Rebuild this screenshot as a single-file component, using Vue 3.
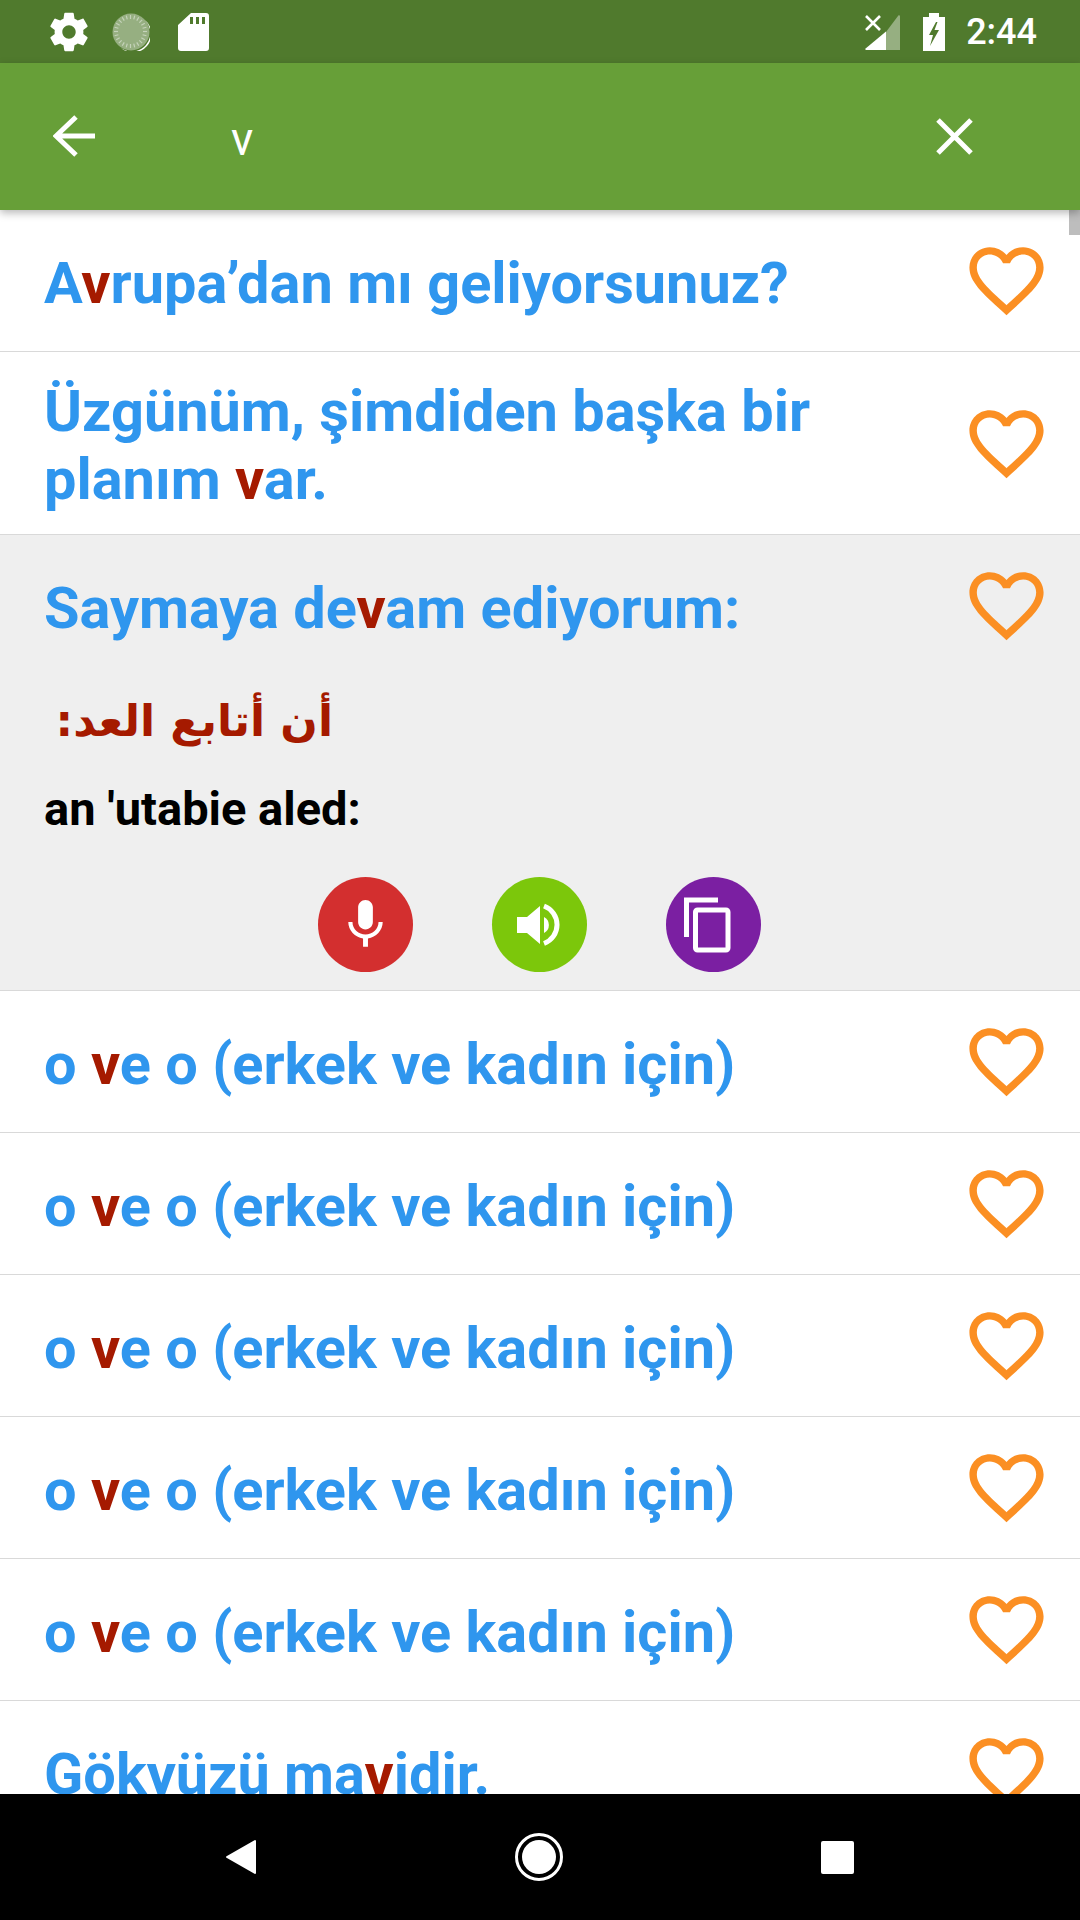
<script setup>
const heart = 'M16.5 3c-1.74 0-3.41.81-4.5 2.09C10.91 3.81 9.24 3 7.5 3 4.42 3 2 5.42 2 8.5c0 3.78 3.4 6.86 8.55 11.54L12 21.35l1.45-1.32C18.6 15.36 22 12.28 22 8.5 22 5.42 19.58 3 16.5 3zm-4.4 15.55l-.1.1-.1-.1C7.14 14.24 4 11.39 4 8.5 4 6.5 5.5 5 7.5 5c1.54 0 3.04.99 3.57 2.36h1.87C13.46 5.99 14.96 5 16.5 5c2 0 3.5 1.5 3.5 3.5 0 2.89-3.14 5.74-7.9 10.05z'

const row = [['o '], ['v', true], ['e o (erkek ve kadın için)']]
const rowsBefore = [
  { parts: [['A'], ['v', true], ['rupa’dan mı geliyorsunuz?']] },
  { parts: [['Üzgünüm, şimdiden başka bir planım '], ['v', true], ['ar.']] },
]
const rowsAfter = [
  { parts: row }, { parts: row }, { parts: row }, { parts: row }, { parts: row },
  { parts: [['Gökyüzü ma'], ['v', true], ['idir.']] },
]
const ticks = Array.from({ length: 24 }, (_, i) => i * 15)
</script>

<template>
  <div class="screen">
    <header class="statusbar">
      <div class="status-left">
        <svg class="gear" viewBox="0 0 24 24"><path fill="#fff" d="M19.43 12.98c.04-.32.07-.64.07-.98s-.03-.66-.07-.98l2.11-1.65c.19-.15.24-.42.12-.64l-2-3.46c-.12-.22-.39-.3-.61-.22l-2.49 1c-.52-.4-1.08-.73-1.69-.98l-.38-2.65C14.46 2.18 14.25 2 14 2h-4c-.25 0-.46.18-.49.42l-.38 2.65c-.61.25-1.17.59-1.69.98l-2.49-1c-.23-.09-.49 0-.61.22l-2 3.46c-.13.22-.07.49.12.64l2.11 1.65c-.04.32-.07.65-.07.98s.03.66.07.98l-2.11 1.65c-.19.15-.24.42-.12.64l2 3.46c.12.22.39.3.61.22l2.49-1c.52.4 1.08.73 1.69.98l.38 2.65c.03.24.24.42.49.42h4c.25 0 .46-.18.49-.42l.38-2.65c.61-.25 1.17-.59 1.69-.98l2.49 1c.23.09.49 0 .61-.22l2-3.46c.12-.22.07-.49-.12-.64l-2.11-1.65zM12 15.5c-1.93 0-3.5-1.57-3.5-3.5s1.57-3.5 3.5-3.5 3.5 1.57 3.5 3.5-1.57 3.5-3.5 3.5z"/></svg>
        <svg class="dial" viewBox="0 0 38 38">
          <circle cx="19" cy="19" r="18.5" fill="#fff" fill-opacity=".4"/>
          <path d="M33 7 A18.5 18.5 0 0 1 9 35 A17 17 0 0 0 33 7z" fill="#fff"/>
          <g stroke="#fff" stroke-opacity=".45" stroke-width="1.2">
            <line v-for="t in ticks" :key="t" x1="18.5" y1="2" x2="18.5" y2="6" :transform="`rotate(${t} 18.5 18.5)`"/>
          </g>
        </svg>
        <svg class="sd" viewBox="0 0 31 38"><path fill="#fff" fill-rule="evenodd" d="M13 0H28a3 3 0 0 1 3 3V35a3 3 0 0 1-3 3H3a3 3 0 0 1-3-3V12zM12 4V11h3V4zM18 4V11h3V4zM24 4V11h3V4z"/></svg>
      </div>
      <div class="status-right">
        <svg class="signal" viewBox="0 0 36 36">
          <path fill="#fff" fill-opacity=".4" d="M21 17 L33 1 a1 1 0 0 1 2 .5 V35 H21z"/>
          <path fill="#fff" d="M0 34 L21 16.5 V35 H1z"/>
          <path stroke="#fff" stroke-width="2.6" fill="none" d="M1 1 L15 15 M15 1 L1 15"/>
        </svg>
        <svg class="battery" viewBox="0 0 22 38"><path fill="#fff" fill-rule="evenodd" d="M6 0H16V4H22V38H0V4H6zM13 9 L6 22 H10 L7 33 L16 17 H11.5 L14.5 9z"/></svg>
        <span class="time">2:44</span>
      </div>
    </header>

    <div class="toolbar">
      <svg class="tb-back" viewBox="0 0 42 42"><path d="M23 2 L3 21 L23 40 M3 21 H42" fill="none" stroke="#fff" stroke-width="5"/></svg>
      <span class="query">v</span>
      <svg class="tb-close" viewBox="0 0 37 37"><path d="M2 2 L35 35 M35 2 L2 35" fill="none" stroke="#fff" stroke-width="5"/></svg>
    </div>

    <main class="list">
      <div class="scrollbar"></div>

      <div v-for="(r, i) in rowsBefore" :key="'b' + i" class="row">
        <div class="phrase"><span v-for="(p, j) in r.parts" :key="j" :class="{ hit: p[1] }">{{ p[0] }}</span></div>
        <svg class="heart" viewBox="0 0 24 24"><path :d="heart"/></svg>
      </div>

      <div class="open">
        <div class="row-top">
          <div class="phrase">Saymaya de<span class="hit">v</span>am ediyorum:</div>
          <svg class="heart" viewBox="0 0 24 24"><path :d="heart"/></svg>
        </div>
        <div class="arabic" dir="rtl">أن أتابع العد:</div>
        <div class="translit">an 'utabie aled:</div>
        <div class="actions">
          <button class="act red">
            <svg viewBox="0 0 24 24" class="mic"><path fill="#fff" d="M12 14c1.66 0 2.99-1.34 2.99-3L15 5c0-1.66-1.34-3-3-3S9 3.34 9 5v6c0 1.66 1.34 3 3 3zm5.3-3c0 3-2.54 5.1-5.3 5.1S6.7 14 6.7 11H5c0 3.41 2.72 6.23 6 6.72V21h2v-3.28c3.28-.48 6-3.3 6-6.72h-1.7z"/></svg>
          </button>
          <button class="act green">
            <svg viewBox="0 0 95 95" class="full">
              <path fill="#fff" d="M25 40H35L48 29V67L35 56H25z"/>
              <path fill="#fff" d="M52 40 A9 9 0 0 1 52 56z"/>
              <path fill="none" stroke="#fff" stroke-width="5" d="M52 29 A20 20 0 0 1 52 66.5"/>
            </svg>
          </button>
          <button class="act purple">
            <svg viewBox="0 0 95 95" class="full">
              <path fill="none" stroke="#fff" stroke-width="5" d="M20.5 60V23H52"/>
              <rect x="29.5" y="33" width="32.5" height="40" rx="2" fill="none" stroke="#fff" stroke-width="5"/>
            </svg>
          </button>
        </div>
      </div>

      <div v-for="(r, i) in rowsAfter" :key="'a' + i" class="row">
        <div class="phrase"><span v-for="(p, j) in r.parts" :key="j" :class="{ hit: p[1] }">{{ p[0] }}</span></div>
        <svg class="heart" viewBox="0 0 24 24"><path :d="heart"/></svg>
      </div>
    </main>

    <footer class="navbar">
      <svg class="nav-back" viewBox="0 0 32 36"><path fill="#fff" stroke="#fff" stroke-width="2" stroke-linejoin="round" d="M30 2V34L2 18z"/></svg>
      <svg class="nav-home" viewBox="0 0 48 48"><circle cx="24" cy="24" r="22.5" fill="none" stroke="#fff" stroke-width="3"/><circle cx="24" cy="24" r="17" fill="#fff"/></svg>
      <div class="nav-square"></div>
    </footer>
  </div>
</template>

<style scoped>
.screen {
  width: 1080px;
  height: 1920px;
  display: flex;
  flex-direction: column;
  overflow: hidden;
  font-family: Roboto, "DejaVu Sans", sans-serif;
  background: #fff;
}
.statusbar {
  height: 63px;
  flex: none;
  background: #507a2d;
  display: flex;
  align-items: center;
  justify-content: space-between;
  padding: 0 43px 0 46px;
  box-sizing: border-box;
}
.status-left, .status-right { display: flex; align-items: center; }
.gear { width: 46px; height: 46px; }
.dial { width: 38px; height: 38px; margin-left: 20px; }
.sd { width: 31px; height: 38px; margin-left: 28px; }
.signal { width: 36px; height: 36px; margin-top: 2px; }
.battery { width: 22px; height: 38px; margin-left: 22px; }
.time { color: #fff; font-size: 36px; font-weight: 500; margin-left: 21px; }
.toolbar {
  height: 147px;
  flex: none;
  background: #679f38;
  display: flex;
  align-items: center;
  position: relative;
  z-index: 2;
  box-shadow: 0 3px 8px rgba(0, 0, 0, .28);
  padding: 0 107px 0 53px;
  box-sizing: border-box;
}
.tb-back { width: 42px; height: 42px; margin-top: -1px; flex: none; }
.tb-close { width: 37px; height: 37px; margin-top: -1px; flex: none; }
.query {
  flex: 1;
  color: #fff;
  font-size: 46px;
  margin-left: 136px;
  margin-top: 4px;
}
.list {
  flex: 1;
  min-height: 0;
  overflow: hidden;
  position: relative;
}
.scrollbar {
  position: absolute;
  right: 0;
  top: 0;
  width: 11px;
  height: 25px;
  background: #bdbdbd;
}
.row {
  display: flex;
  align-items: center;
  min-height: 142px;
  box-sizing: border-box;
  padding: 25px 29px 21px 44px;
  border-bottom: 1px solid #d9d9d9;
}
.open {
  height: 456px;
  box-sizing: border-box;
  padding: 0 29px 0 44px;
  background: #efefef;
  border-bottom: 1px solid #d9d9d9;
}
.row-top {
  display: flex;
  align-items: center;
  height: 141px;
  box-sizing: border-box;
  padding: 25px 0 21px;
}
.phrase {
  flex: 1;
  font-size: 57.7px;
  line-height: 68px;
  font-weight: 700;
  color: #2f96ee;
}
.hit { color: #a51a00; }
.heart {
  width: 89px;
  height: 89px;
  flex: none;
  margin-left: 10px;
  margin-top: -4px;
  fill: #fb8f23;
}
.arabic {
  width: 273px;
  margin: 10px 0 0 16px;
  font-family: "DejaVu Sans", sans-serif;
  font-weight: 700;
  font-size: 44px;
  line-height: 70px;
  color: #a51a00;
  white-space: nowrap;
}
.translit {
  font-size: 47px;
  font-weight: 700;
  line-height: 50px;
  color: #000;
  margin-top: 28px;
}
.actions {
  display: flex;
  justify-content: center;
  gap: 79px;
  margin: 43px 0 0 -16px;
}
.act {
  width: 95px;
  height: 95px;
  border: 0;
  padding: 0;
  border-radius: 50%;
  display: flex;
  align-items: center;
  justify-content: center;
}
.red { background: #d32f2f; }
.green { background: #7cc70b; }
.purple { background: #7b1fa2; }
.mic { width: 59px; height: 59px; }
.full { width: 95px; height: 95px; }
.navbar {
  height: 126px;
  flex: none;
  background: #000;
  display: flex;
  align-items: center;
  padding-left: 225px;
  box-sizing: border-box;
}
.nav-back { width: 32px; height: 36px; }
.nav-home { width: 48px; height: 48px; margin-left: 258px; }
.nav-square { width: 33px; height: 33px; border-radius: 2px; background: #fff; margin-left: 258px; }
</style>
